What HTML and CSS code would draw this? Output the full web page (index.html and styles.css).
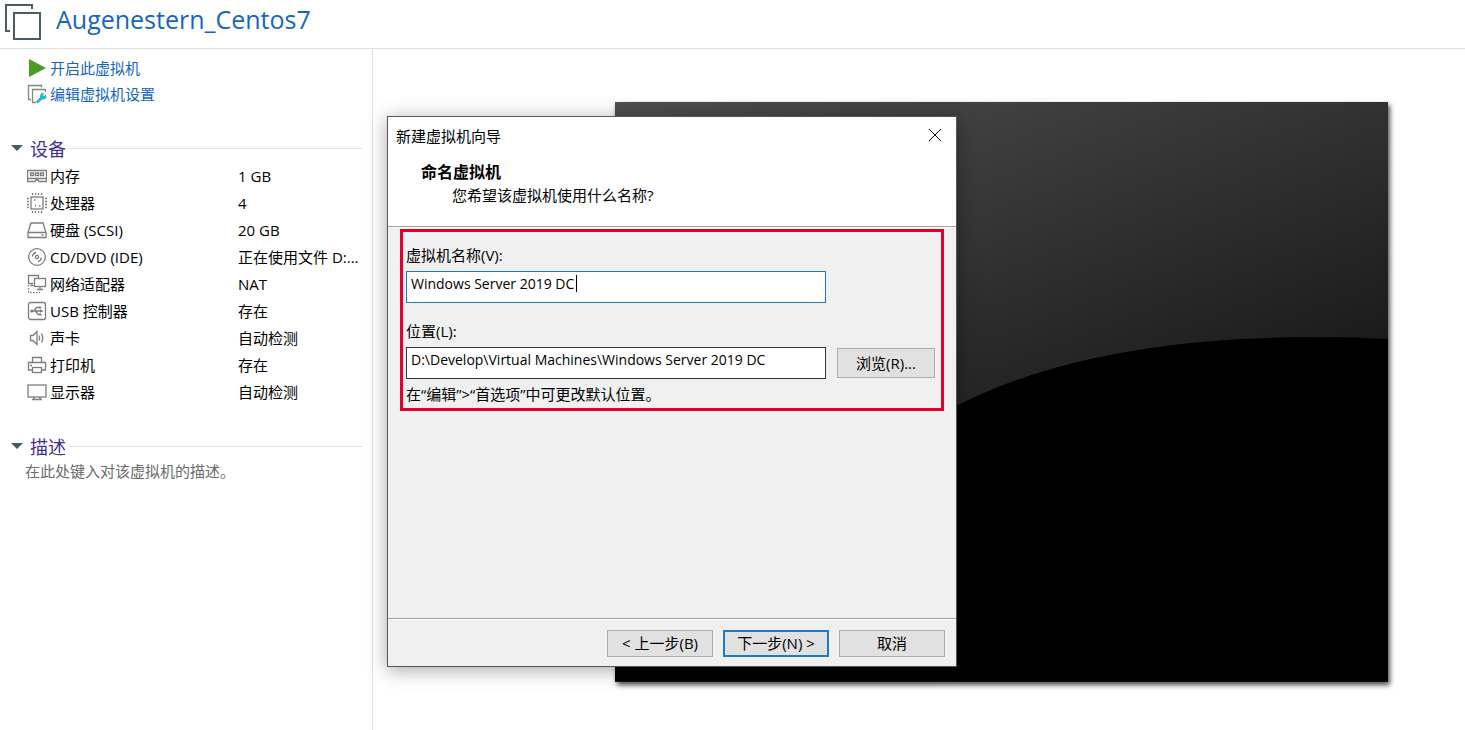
FILE: index.html
```html
<!DOCTYPE html>
<html lang="zh-CN">
<head>
  <meta charset="UTF-8">
  <meta name="viewport" content="width=device-width, initial-scale=1.0">
  <title>Augenestern_Centos7</title>
  <link rel="stylesheet" href="styles.css">
</head>
<body>
  <header class="page-header">
    <svg class="vm-icon" width="36" height="36" viewBox="0 0 36 36" fill="none" stroke="#4b5c66" stroke-width="2">
      <path d="M27 5V1H1v26h4"/>
      <rect x="9" y="9" width="26" height="26"/>
    </svg>
    <h1>Augenestern_Centos7</h1>
  </header>

  <div class="layout">
    <aside class="sidebar">
      <nav class="actions">
        <a href="#start">
          <svg class="icon" viewBox="0 0 20 20"><path d="M2 1l17 9-17 9z" fill="#4c9a2a"/></svg>
          开启此虚拟机
        </a>
        <a href="#settings">
          <svg class="icon" viewBox="0 0 20 20" fill="none" stroke="#858585" stroke-width="1.300">
            <path d="M14.500 3.500V1.500h-13v14H4"/>
            <path d="M18.500 8V5.500h-13v13H9"/>
            <path d="M10 18.500l5.500-5.500" stroke="#27b5d3" stroke-width="3"/>
            <path d="M19 10.500l-2 1.500-1-1 1-2a3.300 3.300 0 1 0 2.500 4z" fill="#27b5d3" stroke="none"/>
          </svg>
          编辑虚拟机设置
        </a>
      </nav>

      <section>
        <h2>设备</h2>
        <table class="devices">
          <tr>
            <th scope="row"><span class="device">
              <svg class="icon" viewBox="0 0 20 20">
                <path d="M.5 4.500h19v11H12l-1-1.500H9l-1 1.500H.5zM.5 12.500h19"/>
                <path d="M3.500 7h3v2.500h-3zM8.500 7h3v2.500h-3zM13.500 7h3v2.500h-3z"/>
              </svg>内存</span></th>
            <td>1 GB</td>
          </tr>
          <tr>
            <th scope="row"><span class="device">
              <svg class="icon" viewBox="0 0 20 20">
                <rect x="4" y="4" width="12" height="12"/>
                <path d="M5.500 0v2M8.500 0v2M11.500 0v2M14.500 0v2M5.500 18v2M8.500 18v2M11.500 18v2M14.500 18v2M0 5.500h2M0 8.500h2M0 11.500h2M0 14.500h2M18 5.500h2M18 8.500h2M18 11.500h2M18 14.500h2"/>
                <path d="M7 7h1.500M12 13h1.500M8 12.500h1"/>
              </svg>处理器</span></th>
            <td>4</td>
          </tr>
          <tr>
            <th scope="row"><span class="device">
              <svg class="icon" viewBox="0 0 20 20">
                <path d="M1 12.500L4 3h12l3 9.500v5H1zM1 12.500h18M14.500 15h2"/>
              </svg>硬盘 (SCSI)</span></th>
            <td>20 GB</td>
          </tr>
          <tr>
            <th scope="row"><span class="device">
              <svg class="icon" viewBox="0 0 20 20">
                <circle cx="10" cy="10" r="8.300"/>
                <circle cx="10" cy="10" r="1.600"/>
                <path d="M5.500 9.500A4.500 4.500 0 0 1 9 5.500M14.500 10.500A4.500 4.500 0 0 1 11 14.500"/>
              </svg>CD/DVD (IDE)</span></th>
            <td>正在使用文件 D:...</td>
          </tr>
          <tr>
            <th scope="row"><span class="device">
              <svg class="icon" viewBox="0 0 20 20">
                <path d="M6 9.500H1.500v-8h10V4M3.500 11.500h3"/>
                <rect x="7.500" y="4.500" width="11" height="8"/>
                <path d="M13 12.500V15M10 15.500h6"/>
                <path d="M1.500 11v7.500H13" stroke-dasharray="1.500 1.500"/>
              </svg>网络适配器</span></th>
            <td>NAT</td>
          </tr>
          <tr>
            <th scope="row"><span class="device">
              <svg class="icon" viewBox="0 0 20 20">
                <rect x="1.500" y="1.500" width="17" height="17" rx="2"/>
                <path d="M5 10h10M7 10l2.500-3.500h3M8.500 10l2.500 3.500h2"/>
                <circle class="solid" cx="4.800" cy="10" r="1.600"/>
                <path class="solid" d="M13 8.300l3.500 1.700-3.500 1.700zM12 5.500h2v2h-2zM12.500 12.500h2v2h-2z"/>
              </svg>USB 控制器</span></th>
            <td>存在</td>
          </tr>
          <tr>
            <th scope="row"><span class="device">
              <svg class="icon" viewBox="0 0 20 20">
                <path d="M3.500 7.500h2.500l4-4v13l-4-4H3.500zM12 7.500q1.500 2.500 0 5M14.500 5.500q2.500 4.500 0 9"/>
              </svg>声卡</span></th>
            <td>自动检测</td>
          </tr>
          <tr>
            <th scope="row"><span class="device">
              <svg class="icon" viewBox="0 0 20 20">
                <path d="M5.500 7V2.500h9V7M5.500 15H1.500V7.500h17V15h-4M3 10.500h2"/>
                <rect x="5.500" y="12.500" width="9" height="5"/>
              </svg>打印机</span></th>
            <td>存在</td>
          </tr>
          <tr>
            <th scope="row"><span class="device">
              <svg class="icon" viewBox="0 0 20 20">
                <rect x="1" y="3" width="18" height="12"/>
                <path d="M5 17.500h10M7 15v2M13 15v2"/>
              </svg>显示器</span></th>
            <td>自动检测</td>
          </tr>
        </table>
      </section>

      <section>
        <h2>描述</h2>
        <p class="description">在此处键入对该虚拟机的描述。</p>
      </section>
    </aside>

    <main class="stage">
      <svg class="vm-screen" viewBox="0 0 773 580" preserveAspectRatio="none">
        <defs>
          <linearGradient id="sheen" gradientUnits="userSpaceOnUse" x1="0" y1="0" x2="191" y2="494">
            <stop offset="0" stop-color="#4e4e4e"/>
            <stop offset="1" stop-color="#181818"/>
          </linearGradient>
        </defs>
        <rect width="773" height="580" fill="url(#sheen)"/>
        <path d="M0 580V560Q160 400 330 310C430 255 560 235 705 235Q740 235 773 237V580z"/>
      </svg>

      <form class="dialog" role="dialog" aria-labelledby="dialog-title">
        <div class="dialog-top">
          <div class="title-bar">
            <span id="dialog-title">新建虚拟机向导</span>
            <button type="button" class="close" aria-label="关闭">
              <svg width="14" height="14" viewBox="0 0 14 14" stroke="#000"><path d="M1 1l12 12M13 1L1 13"/></svg>
            </button>
          </div>
          <h3>命名虚拟机</h3>
          <p>您希望该虚拟机使用什么名称?</p>
        </div>

        <div class="dialog-body">
          <div class="highlight">
            <label for="vm-name">虚拟机名称(V):</label>
            <div class="field-row">
              <div class="field">
                <input type="text" id="vm-name" class="active" value="Windows Server 2019 DC">
                <span class="caret"></span>
              </div>
            </div>
            <label for="vm-path">位置(L):</label>
            <div class="field-row">
              <div class="field">
                <input type="text" id="vm-path" value="D:\Develop\Virtual Machines\Windows Server 2019 DC">
              </div>
              <button type="button" class="button browse">浏览(R)...</button>
            </div>
            <p class="hint">在“编辑”&gt;“首选项”中可更改默认位置。</p>
          </div>
        </div>

        <div class="dialog-footer">
          <button type="button" class="button">&lt; 上一步(B)</button>
          <button type="submit" class="button default">下一步(N) &gt;</button>
          <button type="button" class="button">取消</button>
        </div>
      </form>
    </main>
  </div>
</body>
</html>
```

FILE: styles.css
```css
* {
  box-sizing: border-box;
}
body {
  margin: 0;
  min-height: 100vh;
  display: flex;
  flex-direction: column;
  font-family: "Open Sans", "Noto Sans CJK SC", sans-serif;
  font-size: 15px;
  color: #000;
  background-color: #fff;
}
h1, h2, h3, p {
  margin: 0;
  font-weight: normal;
}
.page-header {
  display: flex;
  gap: 15px;
  height: 49px;
  padding: 4px 5px;
  border-bottom: 1px solid #e0e0e0;
}
.page-header h1 {
  font-size: 25px;
  line-height: 30px;
  color: #1566c0;
}
.layout {
  flex: 1;
  display: flex;
}

/* left column */
.sidebar {
  flex: none;
  width: 373px;
  padding: 6px 10px;
  border-right: 1px solid #e0e0e0;
}
.icon {
  flex: none;
  width: 20px;
  height: 20px;
}
.actions {
  padding-left: 17px;
}
.actions a {
  display: flex;
  align-items: center;
  gap: 3px;
  height: 26px;
  padding-bottom: 1px;
  color: #1566c0;
  text-decoration: none;
}
.sidebar section {
  margin-top: 28px;
}
.sidebar h2 {
  display: flex;
  align-items: center;
  height: 27px;
  padding-bottom: 1px;
  font-size: 18px;
  color: #3d2f9c;
}
.sidebar h2::before {
  content: "";
  margin: 0 7px 0 1px;
  border: 6px solid transparent;
  border-top-color: #455a64;
  border-bottom: 0;
}
.sidebar h2::after {
  content: "";
  flex: 1;
  height: 1px;
  margin-left: 3px;
  background-color: #e0e0e0;
}
.devices {
  width: 100%;
  border-collapse: collapse;
}
.devices th,
.devices td {
  height: 27px;
  padding: 0;
  font-weight: normal;
  text-align: left;
  line-height: 22px;
  white-space: nowrap;
}
.devices th {
  width: 228px;
  padding-left: 17px;
}
.device {
  display: flex;
  align-items: center;
  gap: 3px;
}
.device .icon {
  fill: none;
  stroke: #7d7d7d;
  stroke-width: 1.3;
}
.device .solid {
  fill: #7d7d7d;
  stroke: none;
}
.description {
  padding-left: 15px;
  line-height: 22px;
  color: #6b6b6b;
}

/* preview of the guest screen */
.stage {
  flex: 1;
  position: relative;
  padding: 53px 77px 48px 242px;
}
.vm-screen {
  display: block;
  width: 100%;
  aspect-ratio: 4 / 3;
  box-shadow: 2px 3px 5px rgba(0, 0, 0, 0.7);
}

/* wizard window */
.dialog {
  position: absolute;
  top: 67px;
  left: 14px;
  width: 570px;
  min-height: 551px;
  display: flex;
  flex-direction: column;
  border: 1px solid #555;
  background-color: #f0f0f0;
  box-shadow: 0 3px 18px rgba(0, 0, 0, 0.35);
}
.dialog-top {
  height: 110px;
  background-color: #fff;
  border-bottom: 1px solid #a0a0a0;
}
.title-bar {
  display: flex;
  justify-content: space-between;
  align-items: center;
  height: 36px;
  padding: 0 8px;
}
.close {
  display: flex;
  padding: 6px;
  border: none;
  background: none;
}
.dialog-top h3 {
  padding: 8px 0 0 33px;
  font-size: 16px;
  font-weight: bold;
  line-height: 22px;
}
.dialog-top p {
  padding-left: 64px;
  line-height: 24px;
}
.dialog-body {
  flex: 1;
  padding: 1px 12px;
  border-top: 1px solid #fff;
}
.highlight {
  padding: 12px 6px 3px 3px;
  border: 3px solid #e6002d;
}
.highlight label {
  display: block;
  margin-bottom: 5px;
  line-height: 22px;
}
.field-row {
  display: flex;
  align-items: center;
  gap: 11px;
}
.field-row + label {
  margin-top: 17px;
}
.field {
  position: relative;
  width: 420px;
}
input {
  display: block;
  width: 100%;
  height: 32px;
  padding: 0 4px 8px;
  border: 1px solid #333;
  border-radius: 0;
  background-color: #fff;
  color: #000;
  font-family: inherit;
  font-size: 14px;
  outline: none;
}
input.active {
  border-color: #1a7ad1;
}
.caret {
  position: absolute;
  top: 4px;
  left: 170px;
  width: 1px;
  height: 17px;
  background-color: #000;
}
.hint {
  margin-top: 4px;
  line-height: 22px;
}
.button {
  width: 106px;
  height: 27px;
  padding: 0 0 2px;
  border: 1px solid #adadad;
  background-color: #e1e1e1;
  color: #000;
  font-family: inherit;
  font-size: 15px;
}
.browse {
  width: 98px;
  height: 30px;
}
.default {
  border: 2px solid #1a7ad1;
}
.dialog-footer {
  display: flex;
  justify-content: flex-end;
  gap: 10px;
  height: 48px;
  padding: 11px 11px 0;
  border-top: 1px solid #a0a0a0;
  box-shadow: inset 0 1px #fff;
}
```
